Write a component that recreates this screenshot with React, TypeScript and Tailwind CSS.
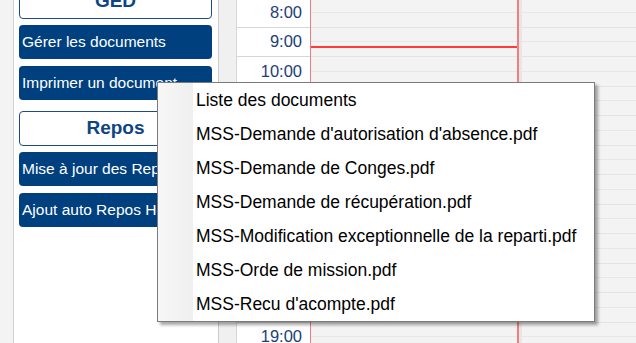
import React from 'react';

const hours = [8, 9, 10, 11, 12, 13, 14, 15, 16, 17, 18, 19];

const documents = [
  'Liste des documents',
  "MSS-Demande d'autorisation d'absence.pdf",
  'MSS-Demande de Conges.pdf',
  'MSS-Demande de récupération.pdf',
  'MSS-Modification exceptionnelle de la reparti.pdf',
  'MSS-Orde de mission.pdf',
  "MSS-Recu d'acompte.pdf",
];

const SectionHeader = ({ label, className = '' }: { label: string; className?: string }) => (
  <div
    className={`h-[35px] shrink-0 bg-white border border-[#1b4c86] rounded-[4px] flex items-center justify-center text-[#0d4585] text-[19px] font-bold ${className}`}
  >
    {label}
  </div>
);

const ActionButton = ({ label, className = '' }: { label: string; className?: string }) => (
  <div
    className={`h-[34px] shrink-0 bg-[#00407f] rounded-[4px] flex items-center pl-[3px] text-white text-[15.5px] whitespace-nowrap overflow-hidden ${className}`}
  >
    {label}
  </div>
);

const App: React.FC = () => {
  return (
    <div className="relative w-[636px] h-[343px] overflow-hidden flex bg-[#f3f3f3] font-['Liberation_Sans',Arial,sans-serif]">
      {/* Left strip */}
      <div className="w-[14px] shrink-0 bg-[#f3f3f3] border-r border-[#d2d2d2]" />

      {/* Side panel */}
      <div className="w-[205px] shrink-0 bg-white border-r border-[#c9c9c9] flex flex-col px-[5px] pr-[6px]">
        <SectionHeader label="GED" className="mt-[-16px]" />
        <ActionButton label="Gérer les documents" className="mt-[6px]" />
        <ActionButton label="Imprimer un document..." className="mt-[7px]" />
        <SectionHeader label="Repos" className="mt-[11px]" />
        <ActionButton label="Mise à jour des Repos" className="mt-[6px]" />
        <ActionButton label="Ajout auto Repos Hebdo" className="mt-[7px]" />
      </div>

      {/* Calendar */}
      <div className="flex-1 flex">
        <div className="w-[18px] shrink-0 bg-[#f0f0f0] border-r border-[#d6d6d6]" />
        <div className="w-[73px] shrink-0 bg-white flex flex-col mt-[-2px]">
          {hours.map((h) => (
            <div
              key={h}
              className="h-[29.5px] shrink-0 border-b border-[#d6d6d6] flex items-center justify-end pr-[8px] text-[16.5px] text-[#1d3d7c]"
            >
              {h}:00
            </div>
          ))}
        </div>
        <div className="w-[1px] shrink-0 bg-[#f27c7c]" />
        <div className="relative w-[206px] shrink-0 bg-[#f3f3f3] flex flex-col mt-[-2px]">
          {hours.map((h) => (
            <div key={h} className="shrink-0 flex flex-col">
              <div className="h-[14.75px] border-b border-[#e7e7e7]" />
              <div className="h-[14.75px] border-b border-[#e4e4e4]" />
            </div>
          ))}
          {/* current time */}
          <div className="absolute left-0 right-0 top-[48px] h-[2px] bg-[#ff3b3b]" />
        </div>
        <div className="w-[2px] shrink-0 bg-[#f37e7e]" />
        <div className="w-[3px] shrink-0 bg-[#e6e6e6]" />
        <div className="flex-1 bg-[#f3f3f3] flex flex-col mt-[-2px]">
          {hours.map((h) => (
            <div key={h} className="shrink-0 flex flex-col">
              <div className="h-[14.75px] border-b border-[#e7e7e7]" />
              <div className="h-[14.75px] border-b border-[#e4e4e4]" />
            </div>
          ))}
        </div>
      </div>

      {/* Context menu */}
      <div className="absolute left-[157px] top-[82px] w-[438px] bg-white border border-[#7b7b7b] shadow-[3px_3px_3px_rgba(0,0,0,0.35)] flex">
        <div className="w-[35px] shrink-0 bg-gradient-to-r from-[#f7f7f7] to-[#efefef]" />
        <div className="flex-1 flex flex-col pl-[3px]">
          {documents.map((doc) => (
            <div key={doc} className="h-[34px] flex items-center text-[17.5px] text-black whitespace-nowrap">
              {doc}
            </div>
          ))}
        </div>
      </div>
    </div>
  );
};

export default App;
